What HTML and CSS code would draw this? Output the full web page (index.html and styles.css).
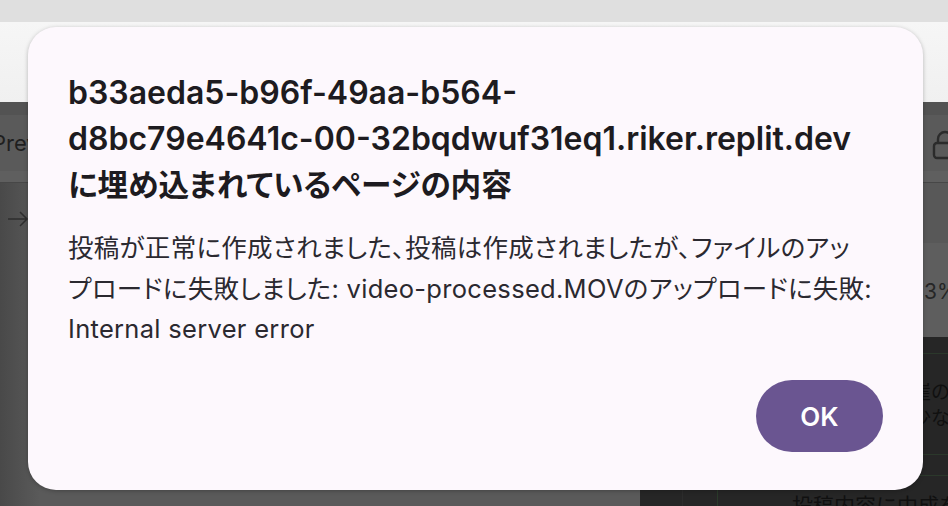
FILE: index.html
```html
<!DOCTYPE html>
<html lang="ja">
<head>
<meta charset="utf-8">
<title>Alert</title>
<link rel="stylesheet" href="styles.css">
</head>
<body>
<header class="browser">
  <div class="tabstrip"></div>
  <div class="toolbar"></div>
</header>
<main class="page">
  <div class="page-head">
    <span class="page-title">Preview</span>
    <svg class="lock" width="26" height="30" viewBox="0 0 26 30" aria-hidden="true">
      <path d="M6 13V9a7 7 0 0 1 14 0v4" fill="none" stroke="#2b2b2b" stroke-width="2.4"/>
      <rect x="2" y="13" width="22" height="15" rx="3" fill="none" stroke="#2b2b2b" stroke-width="2.4"/>
    </svg>
  </div>
  <div class="page-body">
    <div class="left-col">
      <svg class="arrow" width="22" height="16" viewBox="0 0 22 16" aria-hidden="true">
        <path d="M1 8h19M13 1l7 7-7 7" fill="none" stroke="#2e2e2e" stroke-width="1.5"/>
      </svg>
    </div>
    <div class="right-col">
      <div class="band"></div>
      <div class="stat"><span class="stat-value">33%</span></div>
      <div class="dark-panel">
        <div class="dp-row dp-top"></div>
        <div class="dp-row dp-text"><p class="dp-note">崖の<br>少ない</p></div>
        <div class="dp-row dp-gap"></div>
        <div class="dp-row dp-last"><p class="dp-foot">投稿内容に中成を</p></div>
      </div>
    </div>
  </div>
</main>
<div class="dialog" role="alertdialog">
  <h2 class="dialog-title"><span class="host">b33aeda5-b96f-49aa-b564-</span><wbr><span class="host">d8bc79e4641c-00-32bqdwuf31eq1.riker.replit.dev</span> <span class="title-suffix">に埋め込まれているページの内容</span></h2>
  <p class="dialog-text">投稿が正常に作成されました、投稿は作成されましたが、ファイルのアッ<br>プロードに失敗しました: video-processed.MOVのアップロードに失敗: Internal server error</p>
  <div class="dialog-actions">
    <button class="btn-ok" type="button">OK</button>
  </div>
</div>
</body>
</html>
```

FILE: styles.css
```css
* { box-sizing: border-box; }
html, body {
  margin: 0;
  width: 948px;
  height: 506px;
  overflow: hidden;
}
body {
  position: relative;
  font-family: "Inter", "Noto Sans CJK JP", sans-serif;
  background: #5a5a5a;
}

/* browser chrome (not dimmed) */
.browser { height: 102px; display: flex; flex-direction: column; }
.tabstrip { height: 22px; background: #dfdfdf; }
.toolbar { flex: 1; background: linear-gradient(#f6f6f6, #f0f0f0); }

/* dimmed page */
.page { height: 404px; display: flex; flex-direction: column; }
.page-head {
  height: 81px;
  flex-shrink: 0;
  display: flex;
  align-items: center;
  justify-content: space-between;
  background: linear-gradient(#535353 0 13px, #5a5a5a 13px 69px, #5f5f5f 69px);
  border-bottom: 1px solid #474747;
  padding-top: 2px;
}
.page-title {
  margin-left: -8px;
  font-family: "Inter", sans-serif;
  font-size: 22px;
  color: #1f1f1f;
}
.lock { margin-right: -10px; margin-top: 4px; }

.page-body { flex: 1; display: flex; min-height: 0; }
.left-col {
  width: 640px;
  flex-shrink: 0;
  background: linear-gradient(90deg, #494949 0, #5a5a5a 40px);
  padding: 28px 0 0 7px;
  line-height: 0;
}
.right-col { flex: 1; min-width: 0; display: flex; flex-direction: column; }
.band { height: 60px; flex-shrink: 0; background: #585858; }
.stat {
  height: 94px;
  flex-shrink: 0;
  background: #5e5e5e;
  padding: 36px 0 0 271px;
  font-size: 21px;
  line-height: 26px;
  color: #262626;
  white-space: nowrap;
}
.dark-panel {
  flex: 1;
  min-height: 0;
  overflow: hidden;
  background: #262626;
  background-image: linear-gradient(90deg, transparent 42px, #2c2c2c 42px 43px, transparent 43px 77px, #2a3a2a 77px 78px, transparent 78px);
  display: flex;
  flex-direction: column;
}
.dp-row { flex-shrink: 0; border-bottom: 1px solid #2b382b; }
.dp-top { height: 17px; }
.dp-text { height: 101px; padding: 24px 0 0 272px; }
.dp-gap { height: 21px; }
.dp-last { flex: 1; border-bottom: 0; padding: 15px 0 0 152px; }
.dp-note, .dp-foot {
  margin: 0;
  font-family: "Noto Sans CJK JP", sans-serif;
  font-size: 19px;
  line-height: 26px;
  color: #101010;
  white-space: nowrap;
}
.dp-foot { font-size: 21px; }

/* dialog */
.dialog {
  position: absolute;
  left: 28px;
  top: 27px;
  width: 895px;
  height: 463px;
  background: #fdf8fd;
  border-radius: 28px;
  box-shadow: 0 1px 4px rgba(0, 0, 0, 0.25);
  padding: 43px 40px 38px 40px;
  display: flex;
  flex-direction: column;
}
.dialog-title {
  margin: 0 14px 0 0;
  font-size: 32px;
  line-height: 46px;
  font-weight: 600;
  color: #1d1b20;
  font-feature-settings: "palt";
}
.host { white-space: nowrap; }
.title-suffix { font-size: 30.6px; }
.dialog-text {
  margin: 20px 0 0 0;
  font-size: 25.5px;
  line-height: 40.5px;
  letter-spacing: 0.3px;
  color: #2b2930;
  font-feature-settings: "palt";
}
.dialog-actions {
  margin-top: auto;
  display: flex;
  justify-content: flex-end;
}
.btn-ok {
  width: 127px;
  height: 72px;
  border: 0;
  border-radius: 36px;
  background: #6a5591;
  color: #ffffff;
  font-family: "Inter", sans-serif;
  font-size: 26px;
  font-weight: 600;
}
```
